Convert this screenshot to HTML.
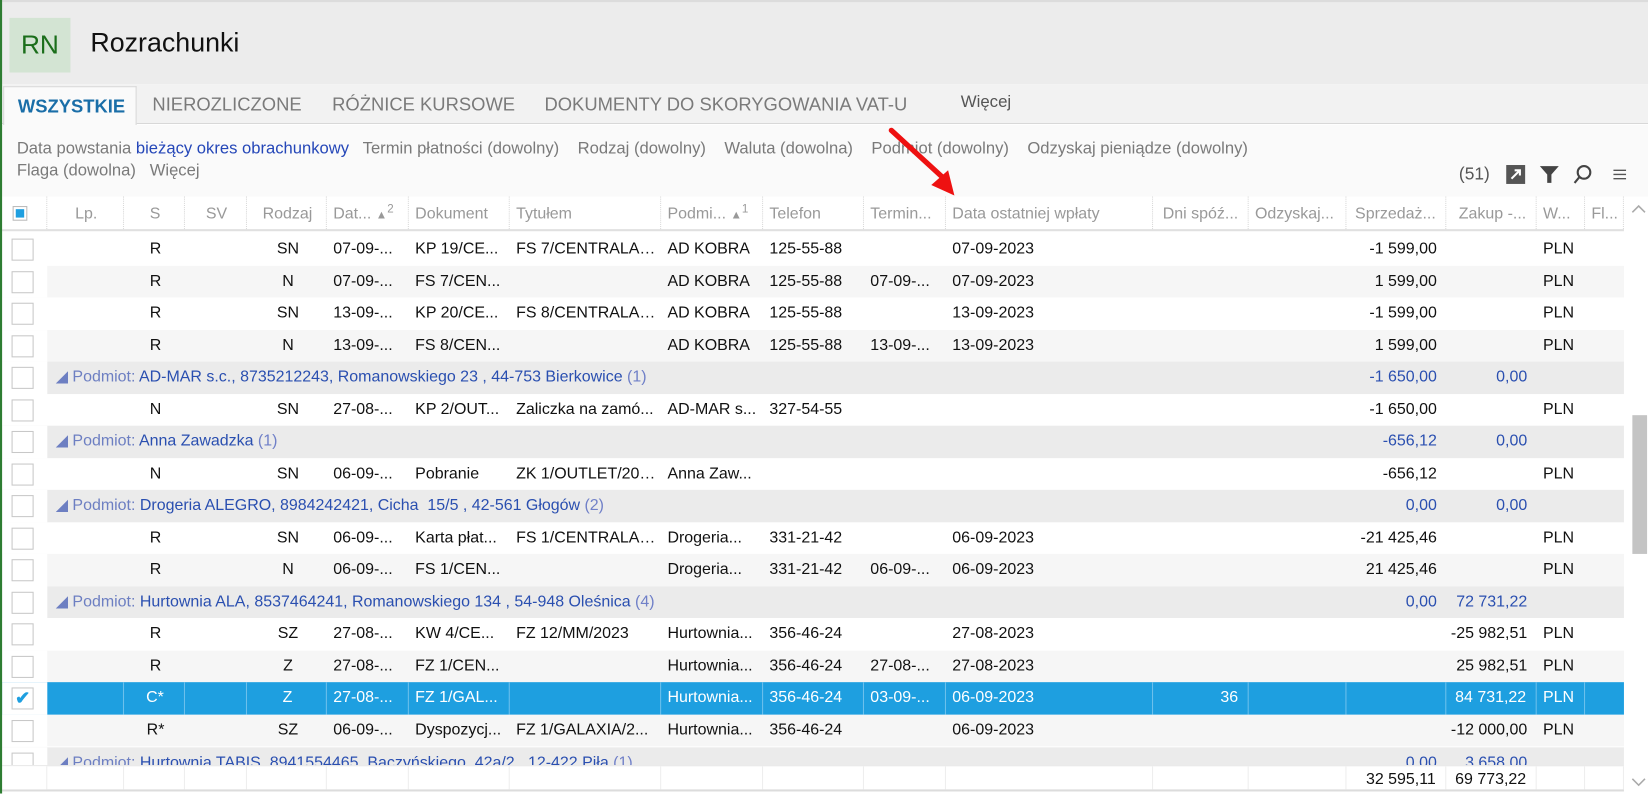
<!DOCTYPE html>
<html><head><meta charset="utf-8"><style>
*{box-sizing:border-box;margin:0;padding:0}
html,body{width:1648px;height:793px;overflow:hidden;background:#fff}
body{font-family:"Liberation Sans",sans-serif;color:#111}
#wrap{position:absolute;left:0;top:0;width:1568px;height:755px;transform:scale(1.0511);transform-origin:0 0;overflow:hidden}
.abs{position:absolute}
#top{left:0;top:0;width:1568px;height:80px;background:#ececec;border-top:2px solid #dcdcdc}
#lg{left:0;top:0;width:2px;height:755px;background:#2e7d32;z-index:5}
#rn{left:9px;top:17px;width:58px;height:52px;background:#d3e4d3;color:#1b6e1b;font-size:25px;line-height:52px;text-align:center}
#title{left:86px;top:27px;font-size:25.5px;color:#111}
#tabs{left:2px;top:80px;width:1566px;height:38px;background:#f2f2f2;border-bottom:1px solid #d8d8d8}
.tab{position:absolute;top:9px;font-size:17.5px;color:#7a7a7a}
#act{left:3px;top:82px;width:127px;height:37px;background:#fafafa;border:1px solid #d8d8d8;border-bottom:none;font-weight:bold;color:#1a6ea8;font-size:17.5px;padding:8px 0 0 13px}
#filt{left:2px;top:119px;width:1566px;height:68px;background:#fafafa}
.f{position:absolute;font-size:15.8px;color:#7a7a7a;white-space:nowrap}
.f b{font-weight:normal;color:#2547b8}
.row{position:absolute;left:2px;height:30.5px;display:flex;font-size:15.2px;line-height:30.5px;white-space:nowrap}
.row>div{overflow:hidden;text-overflow:ellipsis;padding:0 4px 0 6px;flex:none}
.c0{width:43px}.c1{width:73px}.c2{width:58px}.c3{width:59px}.c4{width:76px}.c5{width:78px}.c6{width:96px}.c7{width:144px}.c8{width:97px}.c9{width:96px}.c10{width:78px}.c11{width:197px}.c12{width:91px}.c13{width:93px}.c14{width:95px}.c15{width:86px}.c16{width:46px}.c17{width:37px}
.ce{text-align:center}.ri{text-align:right;padding:0 9px 0 2px!important;text-overflow:clip!important}
.row>.c0{background:#fff;position:relative}
.cb{position:absolute;left:9px;top:5px;width:21px;height:21px;border:1px solid #c8c8c8;background:#fff}
.w{background:#fff}.g{background:#f6f6f6}.gr{background:#ebebeb;color:#2a4fb0}
.gr .lbl{color:#6d7fc2}.gr .cnt{color:#7080c8}
.sel{background:#1e9fe0;color:#fff}
.sel>div{border-right:1px solid #6cc0ec}
#hdr{top:187px;height:33px;line-height:33px;color:#999;font-size:15.2px;border-bottom:2px solid #e0e0e0;background:#fff}
#hdr>div{border-right:1px dotted #d8d8d8}
#hdr sup{font-size:11px;line-height:0;vertical-align:6px}
#hdr .ar{font-size:11px}
.gspan{width:1236px!important}
#foot{top:728px;height:25px;line-height:25px;border-top:1px solid #e6e6e6;border-bottom:2px solid #dcdcdc;background:#fff}
#foot>div{border-right:1px solid #eee}
</style></head><body><div id="wrap">
<div id="top" class="abs"></div>
<div id="lg" class="abs"></div>
<div id="rn" class="abs">RN</div>
<div id="title" class="abs">Rozrachunki</div>
<div id="tabs" class="abs">
<span class="tab" style="left:143px">NIEROZLICZONE</span>
<span class="tab" style="left:314px">RÓŻNICE KURSOWE</span>
<span class="tab" style="left:516px">DOKUMENTY DO SKORYGOWANIA VAT-U</span>
<span class="tab" style="left:912px;font-size:16px;color:#555">Więcej</span>
</div>
<div id="act" class="abs">WSZYSTKIE</div>
<div id="filt" class="abs"></div>
<div class="f" style="left:16px;top:133px">Data powstania <b>bieżący okres obrachunkowy</b>&nbsp;&nbsp; Termin płatności (dowolny)&nbsp;&nbsp;&nbsp; Rodzaj (dowolny)&nbsp;&nbsp;&nbsp; Waluta (dowolna)&nbsp;&nbsp;&nbsp; Podmiot (dowolny)&nbsp;&nbsp;&nbsp; Odzyskaj pieniądze (dowolny)</div>
<div class="f" style="left:16px;top:154px">Flaga (dowolna)&nbsp;&nbsp; Więcej</div>
<div class="f" style="left:1388px;top:157px;font-size:16.5px;color:#555">(51)</div>
<svg class="abs" style="left:1432px;top:156px" width="20" height="20"><rect x="1" y="1" width="18" height="18" fill="#555"/><path d="M6 14 L14 6 M9 6 H14 V11" stroke="#fff" stroke-width="2" fill="none"/></svg>
<svg class="abs" style="left:1464px;top:156px" width="20" height="20"><path d="M1 2 H19 L12 10 V18 H8 V10 Z" fill="#444"/></svg>
<svg class="abs" style="left:1496px;top:156px" width="20" height="20"><circle cx="11" cy="8" r="6" stroke="#444" stroke-width="2" fill="none"/><path d="M7 12 L2 18" stroke="#444" stroke-width="2"/></svg>
<svg class="abs" style="left:1534px;top:159px" width="14" height="14"><path d="M1 3H13M1 7H13M1 11H13" stroke="#555" stroke-width="1.3"/></svg>

<div id="hdr" class="row"><div class="c0"><span style="position:absolute;left:10px;top:9px;width:14px;height:14px;border:1px solid #bbb;background:#fff"><span style="position:absolute;left:2px;top:2px;width:8px;height:8px;background:#1e9fe0"></span></span></div><div class="c1 ce">Lp.</div><div class="c2 ce">S</div><div class="c3 ce">SV</div><div class="c4 ce">Rodzaj</div><div class="c5">Dat... <span class="ar">▲</span><sup>2</sup></div><div class="c6">Dokument</div><div class="c7">Tytułem</div><div class="c8">Podmi... <span class="ar">▲</span><sup>1</sup></div><div class="c9">Telefon</div><div class="c10">Termin...</div><div class="c11">Data ostatniej wpłaty</div><div class="c12 ri">Dni spóź...</div><div class="c13">Odzyskaj...</div><div class="c14 ri">Sprzedaż...</div><div class="c15 ri">Zakup -...</div><div class="c16">W...</div><div class="c17">Fl...</div></div>

<div class="row w" style="top:222px"><div class="c0"><span class="cb"></span></div><div class="c1"></div><div class="c2 ce">R</div><div class="c3"></div><div class="c4 ce">SN</div><div class="c5">07-09-...</div><div class="c6">KP 19/CE...</div><div class="c7">FS 7/CENTRALA/...</div><div class="c8">AD KOBRA</div><div class="c9">125-55-88</div><div class="c10"></div><div class="c11">07-09-2023</div><div class="c12"></div><div class="c13"></div><div class="c14 ri">-1 599,00</div><div class="c15"></div><div class="c16">PLN</div><div class="c17"></div></div>
<div class="row g" style="top:252.5px"><div class="c0"><span class="cb"></span></div><div class="c1"></div><div class="c2 ce">R</div><div class="c3"></div><div class="c4 ce">N</div><div class="c5">07-09-...</div><div class="c6">FS 7/CEN...</div><div class="c7"></div><div class="c8">AD KOBRA</div><div class="c9">125-55-88</div><div class="c10">07-09-...</div><div class="c11">07-09-2023</div><div class="c12"></div><div class="c13"></div><div class="c14 ri">1 599,00</div><div class="c15"></div><div class="c16">PLN</div><div class="c17"></div></div>
<div class="row w" style="top:283px"><div class="c0"><span class="cb"></span></div><div class="c1"></div><div class="c2 ce">R</div><div class="c3"></div><div class="c4 ce">SN</div><div class="c5">13-09-...</div><div class="c6">KP 20/CE...</div><div class="c7">FS 8/CENTRALA/...</div><div class="c8">AD KOBRA</div><div class="c9">125-55-88</div><div class="c10"></div><div class="c11">13-09-2023</div><div class="c12"></div><div class="c13"></div><div class="c14 ri">-1 599,00</div><div class="c15"></div><div class="c16">PLN</div><div class="c17"></div></div>
<div class="row g" style="top:313.6px"><div class="c0"><span class="cb"></span></div><div class="c1"></div><div class="c2 ce">R</div><div class="c3"></div><div class="c4 ce">N</div><div class="c5">13-09-...</div><div class="c6">FS 8/CEN...</div><div class="c7"></div><div class="c8">AD KOBRA</div><div class="c9">125-55-88</div><div class="c10">13-09-...</div><div class="c11">13-09-2023</div><div class="c12"></div><div class="c13"></div><div class="c14 ri">1 599,00</div><div class="c15"></div><div class="c16">PLN</div><div class="c17"></div></div>
<div class="row gr" style="top:344.1px"><div class="c0"><span class="cb"></span></div><div class="gspan" style="padding-left:8px"><span class="lbl">◢ Podmiot:</span> AD-MAR s.c., 8735212243, Romanowskiego 23 , 44-753 Bierkowice <span class="cnt">(1)</span></div><div class="c14 ri">-1 650,00</div><div class="c15 ri">0,00</div><div class="c16"></div><div class="c17"></div></div>
<div class="row w" style="top:374.7px"><div class="c0"><span class="cb"></span></div><div class="c1"></div><div class="c2 ce">N</div><div class="c3"></div><div class="c4 ce">SN</div><div class="c5">27-08-...</div><div class="c6">KP 2/OUT...</div><div class="c7">Zaliczka na zamó...</div><div class="c8">AD-MAR s...</div><div class="c9">327-54-55</div><div class="c10"></div><div class="c11"></div><div class="c12"></div><div class="c13"></div><div class="c14 ri">-1 650,00</div><div class="c15"></div><div class="c16">PLN</div><div class="c17"></div></div>
<div class="row gr" style="top:405.2px"><div class="c0"><span class="cb"></span></div><div class="gspan" style="padding-left:8px"><span class="lbl">◢ Podmiot:</span> Anna Zawadzka <span class="cnt">(1)</span></div><div class="c14 ri">-656,12</div><div class="c15 ri">0,00</div><div class="c16"></div><div class="c17"></div></div>
<div class="row w" style="top:435.7px"><div class="c0"><span class="cb"></span></div><div class="c1"></div><div class="c2 ce">N</div><div class="c3"></div><div class="c4 ce">SN</div><div class="c5">06-09-...</div><div class="c6">Pobranie</div><div class="c7">ZK 1/OUTLET/2023</div><div class="c8">Anna Zaw...</div><div class="c9"></div><div class="c10"></div><div class="c11"></div><div class="c12"></div><div class="c13"></div><div class="c14 ri">-656,12</div><div class="c15"></div><div class="c16">PLN</div><div class="c17"></div></div>
<div class="row gr" style="top:466.2px"><div class="c0"><span class="cb"></span></div><div class="gspan" style="padding-left:8px"><span class="lbl">◢ Podmiot:</span> Drogeria ALEGRO, 8984242421, Cicha&nbsp; 15/5 , 42-561 Głogów <span class="cnt">(2)</span></div><div class="c14 ri">0,00</div><div class="c15 ri">0,00</div><div class="c16"></div><div class="c17"></div></div>
<div class="row w" style="top:496.8px"><div class="c0"><span class="cb"></span></div><div class="c1"></div><div class="c2 ce">R</div><div class="c3"></div><div class="c4 ce">SN</div><div class="c5">06-09-...</div><div class="c6">Karta płat...</div><div class="c7">FS 1/CENTRALA/...</div><div class="c8">Drogeria...</div><div class="c9">331-21-42</div><div class="c10"></div><div class="c11">06-09-2023</div><div class="c12"></div><div class="c13"></div><div class="c14 ri">-21 425,46</div><div class="c15"></div><div class="c16">PLN</div><div class="c17"></div></div>
<div class="row g" style="top:527.3px"><div class="c0"><span class="cb"></span></div><div class="c1"></div><div class="c2 ce">R</div><div class="c3"></div><div class="c4 ce">N</div><div class="c5">06-09-...</div><div class="c6">FS 1/CEN...</div><div class="c7"></div><div class="c8">Drogeria...</div><div class="c9">331-21-42</div><div class="c10">06-09-...</div><div class="c11">06-09-2023</div><div class="c12"></div><div class="c13"></div><div class="c14 ri">21 425,46</div><div class="c15"></div><div class="c16">PLN</div><div class="c17"></div></div>
<div class="row gr" style="top:557.8px"><div class="c0"><span class="cb"></span></div><div class="gspan" style="padding-left:8px"><span class="lbl">◢ Podmiot:</span> Hurtownia ALA, 8537464241, Romanowskiego 134 , 54-948 Oleśnica <span class="cnt">(4)</span></div><div class="c14 ri">0,00</div><div class="c15 ri">72 731,22</div><div class="c16"></div><div class="c17"></div></div>
<div class="row w" style="top:588.4px"><div class="c0"><span class="cb"></span></div><div class="c1"></div><div class="c2 ce">R</div><div class="c3"></div><div class="c4 ce">SZ</div><div class="c5">27-08-...</div><div class="c6">KW 4/CE...</div><div class="c7">FZ 12/MM/2023</div><div class="c8">Hurtownia...</div><div class="c9">356-46-24</div><div class="c10"></div><div class="c11">27-08-2023</div><div class="c12"></div><div class="c13"></div><div class="c14"></div><div class="c15 ri">-25 982,51</div><div class="c16">PLN</div><div class="c17"></div></div>
<div class="row g" style="top:618.9px"><div class="c0"><span class="cb"></span></div><div class="c1"></div><div class="c2 ce">R</div><div class="c3"></div><div class="c4 ce">Z</div><div class="c5">27-08-...</div><div class="c6">FZ 1/CEN...</div><div class="c7"></div><div class="c8">Hurtownia...</div><div class="c9">356-46-24</div><div class="c10">27-08-...</div><div class="c11">27-08-2023</div><div class="c12"></div><div class="c13"></div><div class="c14"></div><div class="c15 ri">25 982,51</div><div class="c16">PLN</div><div class="c17"></div></div>
<div class="row sel" style="top:649.4px"><div class="c0" style="border:none"><span class="cb" style="color:#1e9fe0;font-size:17px;line-height:19px;text-align:center;font-weight:bold">✔</span></div><div class="c1"></div><div class="c2 ce">C*</div><div class="c3"></div><div class="c4 ce">Z</div><div class="c5">27-08-...</div><div class="c6">FZ 1/GAL...</div><div class="c7"></div><div class="c8">Hurtownia...</div><div class="c9">356-46-24</div><div class="c10">03-09-...</div><div class="c11">06-09-2023</div><div class="c12 ri">36</div><div class="c13"></div><div class="c14"></div><div class="c15 ri">84 731,22</div><div class="c16">PLN</div><div class="c17" style="border:none"></div></div>
<div class="row g" style="top:679.9px"><div class="c0"><span class="cb"></span></div><div class="c1"></div><div class="c2 ce">R*</div><div class="c3"></div><div class="c4 ce">SZ</div><div class="c5">06-09-...</div><div class="c6">Dyspozycj...</div><div class="c7">FZ 1/GALAXIA/2...</div><div class="c8">Hurtownia...</div><div class="c9">356-46-24</div><div class="c10"></div><div class="c11">06-09-2023</div><div class="c12"></div><div class="c13"></div><div class="c14"></div><div class="c15 ri">-12 000,00</div><div class="c16">PLN</div><div class="c17"></div></div>
<div class="row gr" style="top:710.5px;height:17.5px;overflow:hidden"><div class="c0"><span class="cb"></span></div><div class="gspan" style="padding-left:8px"><span class="lbl">◢ Podmiot:</span> Hurtownia TABIS, 8941554465, Baczyńskiego&nbsp; 42a/2 , 12-422 Piła <span class="cnt">(1)</span></div><div class="c14 ri">0,00</div><div class="c15 ri">3 658,00</div><div class="c16"></div><div class="c17"></div></div>
<div id="foot" class="row"><div class="c0"></div><div class="c1"></div><div class="c2"></div><div class="c3"></div><div class="c4"></div><div class="c5"></div><div class="c6"></div><div class="c7"></div><div class="c8"></div><div class="c9"></div><div class="c10"></div><div class="c11"></div><div class="c12"></div><div class="c13"></div><div class="c14 ri">32 595,11</div><div class="c15 ri">69 773,22</div><div class="c16"></div><div class="c17"></div></div>

<svg class="abs" style="left:840px;top:118px;z-index:6" width="80" height="75"><path d="M8 6 L56 50" stroke="#ee1111" stroke-width="5" stroke-linecap="round"/><path d="M46 58 L68 68 L62 44 Z" fill="#ee1111"/></svg>
<svg class="abs" style="left:1550px;top:192px" width="18" height="14"><path d="M3 10 L9 4 L15 10" stroke="#aaa" stroke-width="1.5" fill="none"/></svg>
<div class="abs" style="left:1553px;top:395px;width:14px;height:132px;background:#c4c4c4"></div>
<svg class="abs" style="left:1550px;top:737px" width="18" height="14"><path d="M3 4 L9 10 L15 4" stroke="#aaa" stroke-width="1.5" fill="none"/></svg>
</div></body></html>
